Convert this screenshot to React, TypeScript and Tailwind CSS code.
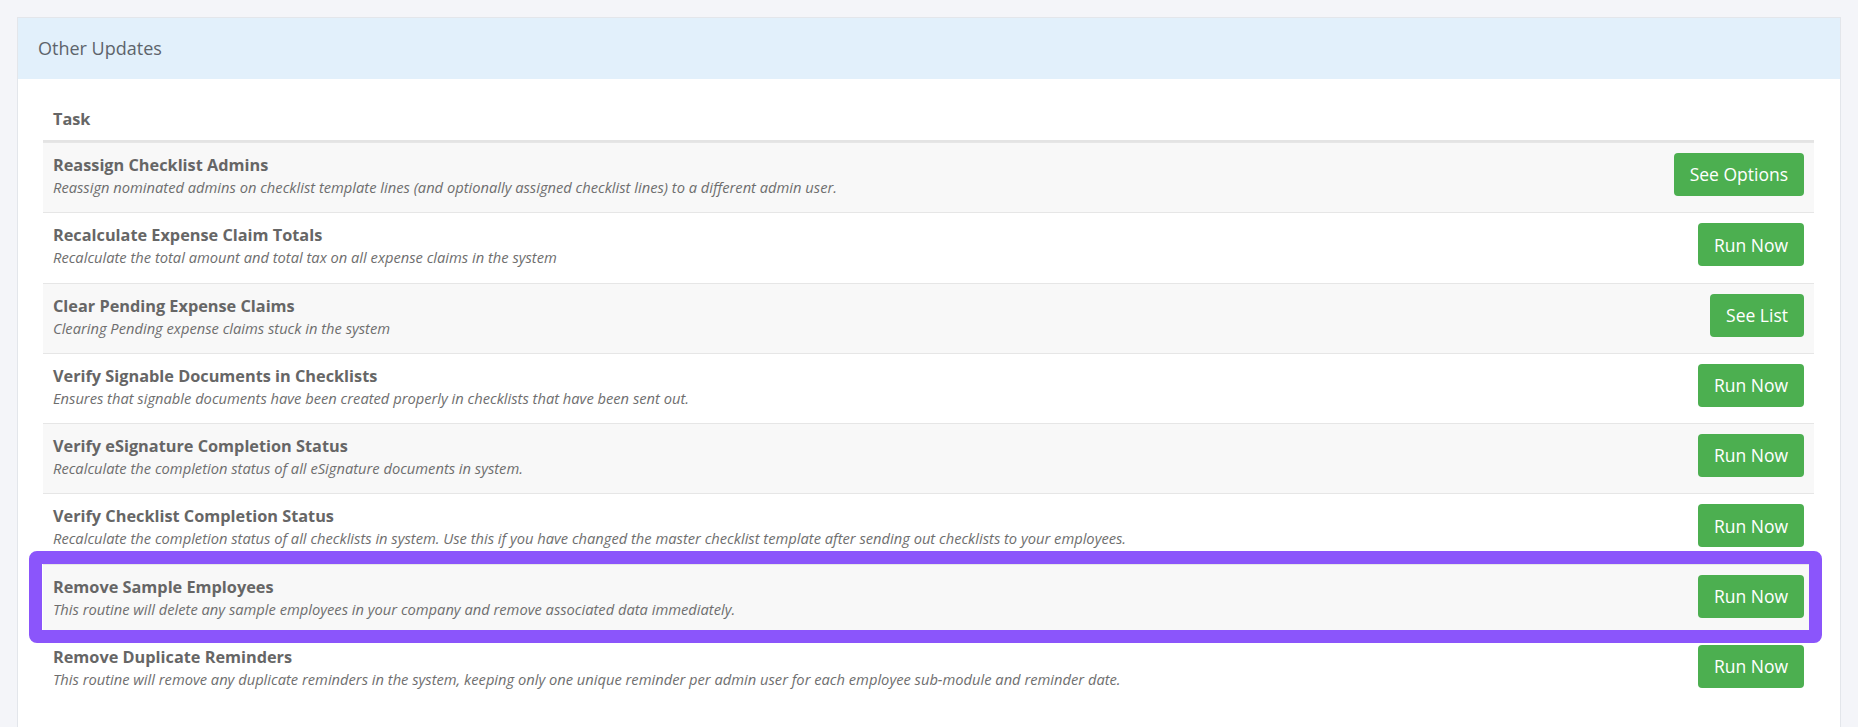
import React from "react";

type Task = {
  title: string;
  description: string;
  action: string;
  highlight?: boolean;
};

const tasks: Task[] = [
  {
    title: "Reassign Checklist Admins",
    description:
      "Reassign nominated admins on checklist template lines (and optionally assigned checklist lines) to a different admin user.",
    action: "See Options",
  },
  {
    title: "Recalculate Expense Claim Totals",
    description: "Recalculate the total amount and total tax on all expense claims in the system",
    action: "Run Now",
  },
  {
    title: "Clear Pending Expense Claims",
    description: "Clearing Pending expense claims stuck in the system",
    action: "See List",
  },
  {
    title: "Verify Signable Documents in Checklists",
    description:
      "Ensures that signable documents have been created properly in checklists that have been sent out.",
    action: "Run Now",
  },
  {
    title: "Verify eSignature Completion Status",
    description: "Recalculate the completion status of all eSignature documents in system.",
    action: "Run Now",
  },
  {
    title: "Verify Checklist Completion Status",
    description:
      "Recalculate the completion status of all checklists in system. Use this if you have changed the master checklist template after sending out checklists to your employees.",
    action: "Run Now",
  },
  {
    title: "Remove Sample Employees",
    description:
      "This routine will delete any sample employees in your company and remove associated data immediately.",
    action: "Run Now",
    highlight: true,
  },
  {
    title: "Remove Duplicate Reminders",
    description:
      "This routine will remove any duplicate reminders in the system, keeping only one unique reminder per admin user for each employee sub-module and reminder date.",
    action: "Run Now",
  },
];

function TaskRow({ task, striped }: { task: Task; striped: boolean }) {
  return (
    <div
      className={`relative flex h-[70.25px] items-start justify-between border-t border-[#e6e6e6] pl-[10px] pr-[10px] pt-[10px] ${
        striped ? "bg-[#f8f8f8]" : "bg-white"
      }`}
    >
      <div className="flex flex-col">
        <p className="text-[16.3px] font-bold leading-[24px] text-[#666666]">{task.title}</p>
        <p className="text-[14.7px] italic leading-[21px] text-[#6e6e6e]">{task.description}</p>
      </div>
      <button className="h-[43px] shrink-0 rounded-[4px] bg-[#4caf50] px-4 text-[17.5px] text-white">
        {task.action}
      </button>

      {task.highlight && (
        <div className="pointer-events-none absolute -bottom-[9px] -left-[14px] -right-[8px] -top-[14px] z-10 rounded-[8px] border-[13px] border-[#8b55fb]" />
      )}
    </div>
  );
}

export default function App() {
  return (
    <div
      className="min-h-screen bg-[#f4f5f9] px-[17px] pt-[17px]"
      style={{ fontFamily: '"Open Sans", "Noto Sans", sans-serif' }}
    >
      <div className="border border-[#e3e6eb] bg-white">
        <div className="flex h-[61px] items-center bg-[#e2f0fb] px-5 text-[18px] font-medium text-[#5d646b]">
          Other Updates
        </div>

        <div className="pb-6 pl-[25px] pr-[26px] pt-5">
          <div className="flex h-[43px] items-center border-b-2 border-[#e4e4e4] px-[10px] text-[16.3px] font-bold text-[#666666]">
            Task
          </div>
          {tasks.map((task, i) => (
            <TaskRow key={task.title} task={task} striped={i % 2 === 0} />
          ))}
        </div>
      </div>
    </div>
  );
}
